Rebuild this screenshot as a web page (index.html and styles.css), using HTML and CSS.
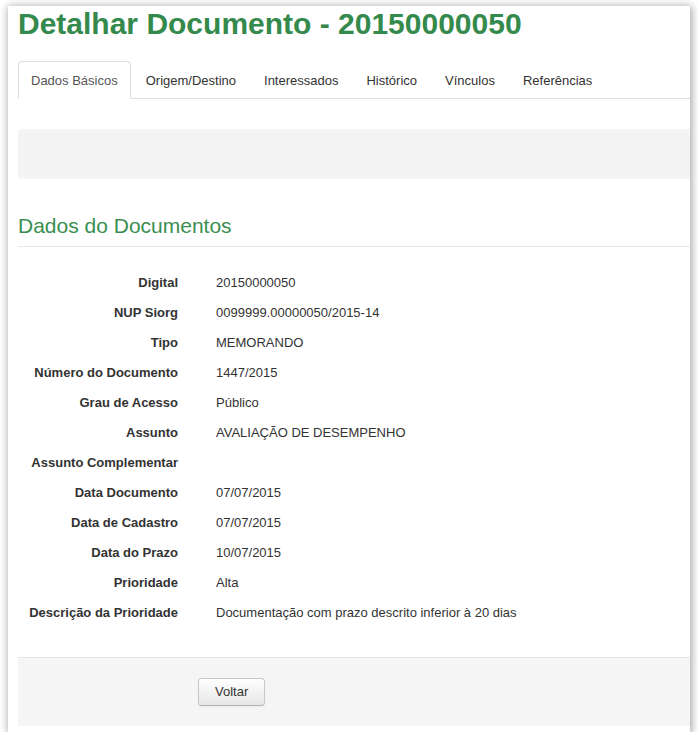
FILE: index.html
```html
<!DOCTYPE html>
<html lang="pt-BR">
<head>
<meta charset="utf-8">
<title>Detalhar Documento</title>
<link rel="stylesheet" href="styles.css">
</head>
<body>
<div class="frame">
  <div class="page">
    <h1 class="title">Detalhar Documento - 20150000050</h1>
    <ul class="tabs">
      <li class="tab active"><a>Dados Básicos</a></li>
      <li class="tab"><a>Origem/Destino</a></li>
      <li class="tab"><a>Interessados</a></li>
      <li class="tab"><a>Histórico</a></li>
      <li class="tab"><a>Vínculos</a></li>
      <li class="tab"><a>Referências</a></li>
    </ul>
    <div class="well"></div>
    <h2 class="section">Dados do Documentos</h2>
    <dl class="fields">
      <dt>Digital</dt><dd>20150000050</dd>
      <dt>NUP Siorg</dt><dd>0099999.00000050/2015-14</dd>
      <dt>Tipo</dt><dd>MEMORANDO</dd>
      <dt>Número do Documento</dt><dd>1447/2015</dd>
      <dt>Grau de Acesso</dt><dd>Público</dd>
      <dt>Assunto</dt><dd>AVALIAÇÃO DE DESEMPENHO</dd>
      <dt>Assunto Complementar</dt><dd></dd>
      <dt>Data Documento</dt><dd>07/07/2015</dd>
      <dt>Data de Cadastro</dt><dd>07/07/2015</dd>
      <dt>Data do Prazo</dt><dd>10/07/2015</dd>
      <dt>Prioridade</dt><dd>Alta</dd>
      <dt>Descrição da Prioridade</dt><dd>Documentação com prazo descrito inferior à 20 dias</dd>
    </dl>
    <div class="actions">
      <button class="btn" type="button">Voltar</button>
    </div>
  </div>
</div>
</body>
</html>
```

FILE: styles.css
```css
html, body {
  margin: 0;
  padding: 0;
  background: #ffffff;
}
body {
  font-family: "Liberation Sans", Arial, sans-serif;
  color: #333333;
}
.frame {
  margin: 6px 0 0 8px;
  width: 682px;
  background: #ffffff;
  box-shadow: 1px 1px 8px 1px rgba(0, 0, 0, 0.35);
  overflow: hidden;
  padding-bottom: 6px;
}
.page {
  margin-left: 10px;
  width: 700px;
}
.title {
  margin: 0;
  font-size: 30px;
  line-height: 36px;
  font-weight: bold;
  color: #348a4c;
}
.tabs {
  list-style: none;
  margin: 19px 0 0 0;
  padding: 0;
  display: flex;
  border-bottom: 1px solid #dddddd;
}
.tab {
  margin: 0 2px -1px 0;
}
.tab a {
  display: block;
  padding: 10px 12px 8px;
  font-size: 13px;
  line-height: 18px;
  color: #333333;
  border: 1px solid transparent;
  border-radius: 4px 4px 0 0;
}
.tab.active a {
  color: #555555;
  background: #ffffff;
  border-color: #dddddd #dddddd transparent;
}
.well {
  margin-top: 30px;
  height: 50px;
  background: #f4f4f4;
  border-radius: 4px 0 0 4px;
}
.section {
  margin: 32px 0 0 0;
  padding-bottom: 5px;
  font-size: 21px;
  line-height: 30px;
  font-weight: normal;
  color: #3a8f50;
  border-bottom: 1px solid #e5e5e5;
}
.fields {
  margin: 21px 0 29px 0;
  display: grid;
  grid-template-columns: 160px 1fr;
  column-gap: 38px;
  font-size: 13px;
  line-height: 30px;
}
.fields dt {
  text-align: right;
  font-weight: bold;
  color: #333333;
}
.fields dd {
  margin: 0;
  color: #333333;
  min-height: 30px;
}
.actions {
  border-top: 1px solid #e5e5e5;
  background: #f5f5f5;
  padding: 20px 20px 20px 180px;
}
.btn {
  display: block;
  font-family: "Liberation Sans", Arial, sans-serif;
  font-size: 13px;
  line-height: 18px;
  padding: 4px 16px;
  color: #333333;
  background: linear-gradient(#ffffff, #e6e6e6);
  border: 1px solid #c8c8c8;
  border-bottom-color: #b3b3b3;
  border-radius: 4px;
  box-shadow: inset 0 1px 0 rgba(255, 255, 255, 0.2), 0 1px 2px rgba(0, 0, 0, 0.05);
}
```
